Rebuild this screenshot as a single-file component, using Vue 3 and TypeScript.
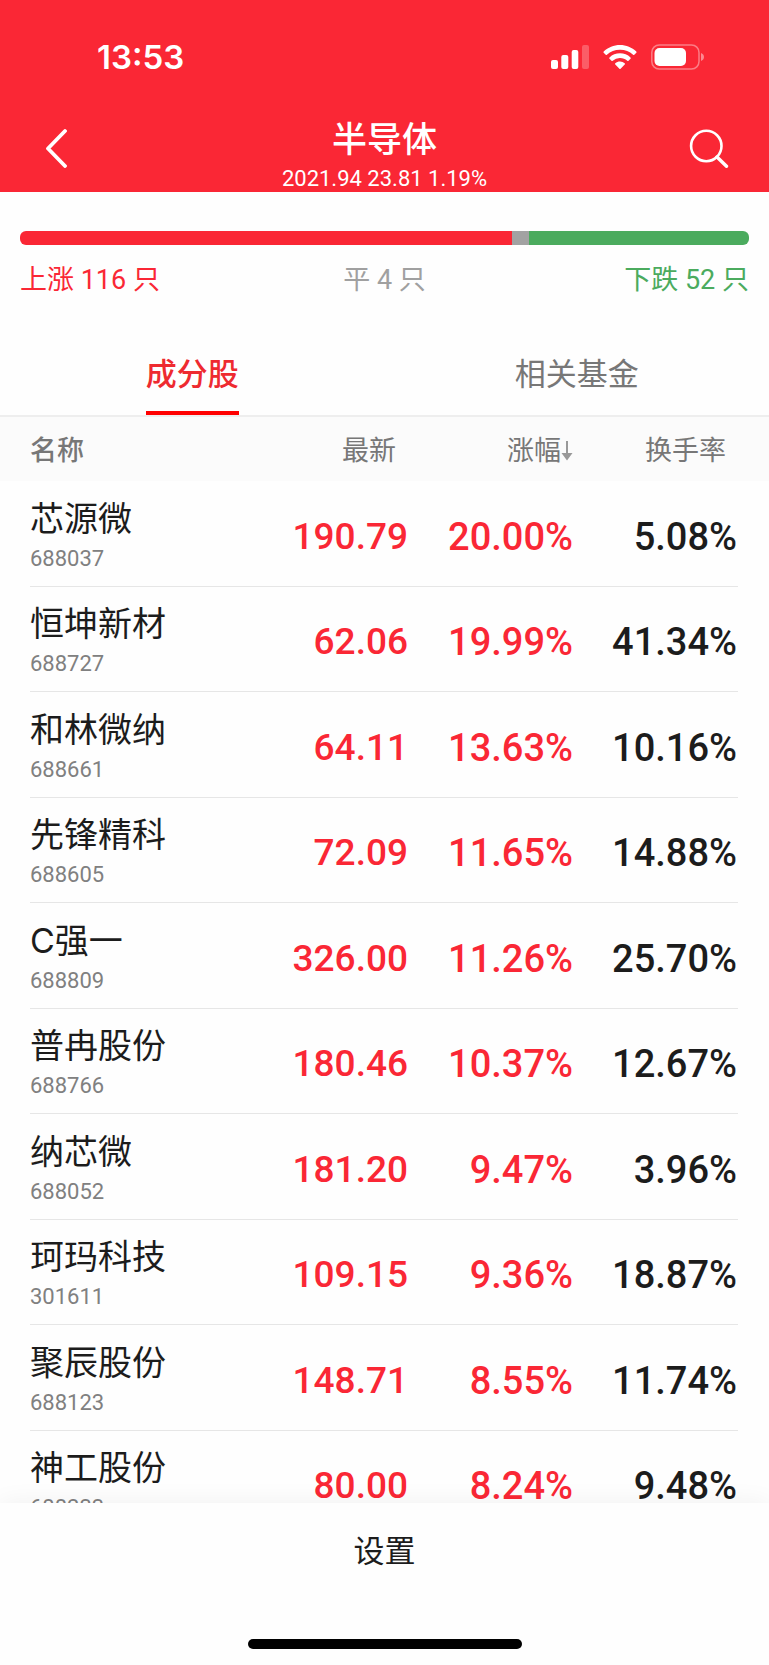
<script setup lang="ts">
import { computed, ref } from 'vue'

interface Stock {
  name: string
  code: string
  price: string
  change: string
  turnover: string
}

const breadth = { up: 116, flat: 4, down: 52 }

const segments = computed(() => [
  { key: 'up', count: breadth.up },
  { key: 'flat', count: breadth.flat },
  { key: 'down', count: breadth.down },
])

const tabs = ['成分股', '相关基金']
const activeTab = ref(0)

const stocks: Stock[] = [
  { name: '芯源微', code: '688037', price: '190.79', change: '20.00%', turnover: '5.08%' },
  { name: '恒坤新材', code: '688727', price: '62.06', change: '19.99%', turnover: '41.34%' },
  { name: '和林微纳', code: '688661', price: '64.11', change: '13.63%', turnover: '10.16%' },
  { name: '先锋精科', code: '688605', price: '72.09', change: '11.65%', turnover: '14.88%' },
  { name: 'C强一', code: '688809', price: '326.00', change: '11.26%', turnover: '25.70%' },
  { name: '普冉股份', code: '688766', price: '180.46', change: '10.37%', turnover: '12.67%' },
  { name: '纳芯微', code: '688052', price: '181.20', change: '9.47%', turnover: '3.96%' },
  { name: '珂玛科技', code: '301611', price: '109.15', change: '9.36%', turnover: '18.87%' },
  { name: '聚辰股份', code: '688123', price: '148.71', change: '8.55%', turnover: '11.74%' },
  { name: '神工股份', code: '688233', price: '80.00', change: '8.24%', turnover: '9.48%' },
]
</script>

<template>
  <div class="screen">
    <header class="top">
      <div class="status">
        <span class="time">13:53</span>
        <div class="indicators">
          <svg width="38" height="26" viewBox="0 0 38 26" fill="#fff" aria-hidden="true">
            <rect x="0" y="16" width="7" height="9" rx="2" />
            <rect x="10.3" y="11" width="7" height="14" rx="2" />
            <rect x="20.7" y="6" width="6.6" height="19" rx="2" />
            <rect x="31" y="1" width="7" height="24" rx="2" opacity="0.25" />
          </svg>
          <svg width="34" height="26" viewBox="0 0 34 26" fill="#fff" aria-hidden="true">
            <path d="M17 1C10.800 1 5 3.400.7 7.500a.9.9 0 0 0 0 1.300l2 2a.9.9 0 0 0 1.200 0A19 19 0 0 1 17 5.700a19 19 0 0 1 13.100 5.100.9.900 0 0 0 1.200 0l2-2a.9.9 0 0 0 0-1.300C29 3.400 23.200 1 17 1z" />
            <path d="M17 9.300c-4 0-7.700 1.500-10.500 4.100a.9.9 0 0 0 0 1.300l2 2a.9.9 0 0 0 1.200 0A10.800 10.800 0 0 1 17 14c2.800 0 5.300 1 7.300 2.700a.9.900 0 0 0 1.200 0l2-2a.9.9 0 0 0 0-1.300A15.500 15.500 0 0 0 17 9.300z" />
            <path d="M17 17.500c-1.800 0-3.400.6-4.700 1.700a.9.9 0 0 0 0 1.300l4.100 4.200a.9.9 0 0 0 1.200 0l4.100-4.200a.9.9 0 0 0 0-1.300A7.200 7.200 0 0 0 17 17.500z" />
          </svg>
          <svg class="battery" width="54" height="26" viewBox="0 0 54 26" aria-hidden="true">
            <rect x="0.8" y="0.9" width="47.200" height="24.200" rx="7.500" fill="none" stroke="#fff" stroke-width="1.500" opacity="0.4" />
            <rect x="3.500" y="4" width="31.500" height="18" rx="5" fill="#fff" />
            <path d="M50 9c1.800.7 3 2.200 3 4s-1.200 3.300-3 4z" fill="#fff" opacity="0.45" />
          </svg>
        </div>
      </div>
      <div class="nav">
        <button class="icon-btn" type="button" aria-label="返回">
          <svg width="27" height="40" viewBox="-5 0 27 40" fill="none" stroke="#fff" stroke-width="3.800" stroke-linecap="round" stroke-linejoin="round">
            <path d="M20 3 3 20.500 20 38" />
          </svg>
        </button>
        <div class="heading">
          <h1>半导体</h1>
          <p>2021.94 23.81 1.19%</p>
        </div>
        <button class="icon-btn" type="button" aria-label="搜索">
          <svg width="40" height="40" viewBox="0 0 40 40" fill="none" stroke="#fff" stroke-width="2.600" stroke-linecap="round">
            <circle cx="17.300" cy="18" r="15.200" />
            <path d="M28 29 37.500 38.300" stroke-width="3.400" />
          </svg>
        </button>
      </div>
    </header>

    <section class="breadth">
      <div class="bar">
        <span v-for="s in segments" :key="s.key" :class="s.key" :style="{ flexGrow: s.count }"></span>
      </div>
      <div class="legend">
        <span class="t-up">上涨 {{ breadth.up }} 只</span>
        <span class="t-flat">平 {{ breadth.flat }} 只</span>
        <span class="t-down">下跌 {{ breadth.down }} 只</span>
      </div>
    </section>

    <nav class="tabs">
      <button
        v-for="(t, i) in tabs"
        :key="t"
        type="button"
        :class="{ active: i === activeTab }"
        @click="activeTab = i"
      >
        <span>{{ t }}</span>
      </button>
    </nav>

    <main class="list">
      <table>
        <colgroup>
          <col />
          <col class="c-num" />
          <col class="c-num" />
          <col class="c-last" />
        </colgroup>
        <thead>
          <tr>
            <th scope="col" class="h-name">名称</th>
            <th scope="col" class="h-price">最新</th>
            <th scope="col">
              <button class="sort" type="button">
                涨幅<svg width="12" height="22" viewBox="0 0 12 22" aria-hidden="true">
                  <path d="M5 1h2v12h4.500L6 20.500.5 13H5z" fill="#999" />
                </svg>
              </button>
            </th>
            <th scope="col" class="h-last">换手率</th>
          </tr>
        </thead>
        <tbody>
          <tr v-for="s in stocks" :key="s.code">
            <td>
              <div class="name">{{ s.name }}</div>
              <div class="code">{{ s.code }}</div>
            </td>
            <td class="num price rise">{{ s.price }}</td>
            <td class="num rise">{{ s.change }}</td>
            <td class="num">{{ s.turnover }}</td>
          </tr>
        </tbody>
      </table>
    </main>

    <footer class="bottom">
      <button type="button">设置</button>
      <div class="home"></div>
    </footer>
  </div>
</template>

<style>
body {
  margin: 0;
  background: #fff;
}
</style>

<style scoped>
.screen {
  display: flex;
  flex-direction: column;
  height: 100vh;
  overflow: hidden;
  background: #fefefe;
  color: #1c1c1c;
  font-family: Roboto, "Noto Sans CJK SC", sans-serif;
}
button {
  padding: 0;
  border: 0;
  background: none;
  color: inherit;
  font: inherit;
  cursor: pointer;
}
svg {
  display: block;
}
.top {
  flex: none;
  background: #fa2735;
  color: #fff;
}
.status {
  display: flex;
  align-items: center;
  justify-content: space-between;
  height: 114px;
  padding: 0 64px 0 97px;
}
.time {
  font: 600 33px/40px Inter, sans-serif;
}
.indicators {
  display: flex;
  align-items: center;
}
.indicators svg + svg {
  margin-left: 14px;
}
.nav {
  display: flex;
  justify-content: space-between;
  height: 78px;
  padding: 0 40px;
}
.icon-btn {
  display: flex;
  align-items: center;
  width: 40px;
  height: 68px;
}
.heading {
  text-align: center;
}
h1 {
  margin: 7px 0 0;
  font-size: 35px;
  font-weight: 500;
  line-height: 40px;
}
.heading p {
  margin: 5px 0 0;
  font-size: 22px;
  line-height: 26px;
}
.breadth {
  flex: none;
  padding: 39px 20px 0;
}
.bar {
  display: flex;
  height: 14px;
  overflow: hidden;
  border-radius: 6px;
}
.bar span {
  flex-basis: 0;
}
.up {
  background: #fa2735;
}
.flat {
  background: #a2a2a2;
}
.down {
  background: #4bab5e;
}
.legend {
  display: grid;
  grid-template-columns: 1fr auto 1fr;
  margin-top: 15px;
  font-size: 27px;
  line-height: 40px;
}
.t-up {
  color: #fa2735;
}
.t-flat {
  color: #a0a0a0;
}
.t-down {
  color: #4bab5e;
  text-align: right;
}
.tabs {
  display: flex;
  flex: none;
  height: 76px;
  margin-top: 39px;
  border-bottom: 2px solid #eee;
}
.tabs button {
  flex: 1;
  color: #777;
  font-size: 31px;
  line-height: 70px;
}
.tabs span {
  display: inline-block;
  height: 71px;
  border-bottom: 4px solid transparent;
}
.tabs .active {
  color: #ee2a30;
  font-weight: 500;
}
.tabs .active span {
  border-color: #f00;
}
.list {
  flex: 1;
  min-height: 0;
  overflow-y: auto;
  scrollbar-width: none;
}
table {
  width: 100%;
  table-layout: fixed;
  border-collapse: collapse;
}
.c-num {
  width: 165px;
}
.c-last {
  width: 196px;
}
th {
  height: 60px;
  padding: 4px 0 0;
  background: #fbfbfb;
  color: #777;
  font-size: 27px;
  font-weight: 400;
  line-height: 40px;
  text-align: right;
}
.h-name {
  padding-left: 30px;
  font-weight: 500;
  text-align: left;
}
.h-price {
  padding-right: 12px;
}
.h-last {
  padding-right: 43px;
}
.sort {
  display: inline-flex;
  align-items: center;
}
tbody tr {
  height: 105px;
  background: linear-gradient(#e6e6e6, #e6e6e6) no-repeat 30px 100% / calc(100% - 61px) 1px;
}
tbody tr:nth-child(odd) {
  height: 106px;
}
td {
  padding: 5px 0 0;
}
td:first-child {
  padding-left: 30px;
}
td:last-child {
  padding-right: 32px;
}
.name {
  font-family: Inter, "Noto Sans CJK SC", sans-serif;
  font-size: 34px;
  line-height: 44px;
}
.code {
  color: #808080;
  font-size: 22px;
  line-height: 36px;
}
.num {
  font-size: 38px;
  font-weight: 500;
  line-height: 44px;
  text-align: right;
}
.price {
  font-size: 37px;
}
.rise {
  color: #fa2735;
}
.bottom {
  position: relative;
  display: flex;
  flex: none;
  flex-direction: column;
  align-items: center;
  justify-content: space-between;
  box-sizing: border-box;
  height: 162px;
  padding: 16px 0;
  background: #fefefe;
  box-shadow: 0 0 24px rgba(0, 0, 0, 0.06);
}
.bottom button {
  width: 100%;
  font-size: 31px;
  line-height: 66px;
}
.home {
  width: 274px;
  height: 10px;
  border-radius: 5px;
  background: #000;
}
</style>
